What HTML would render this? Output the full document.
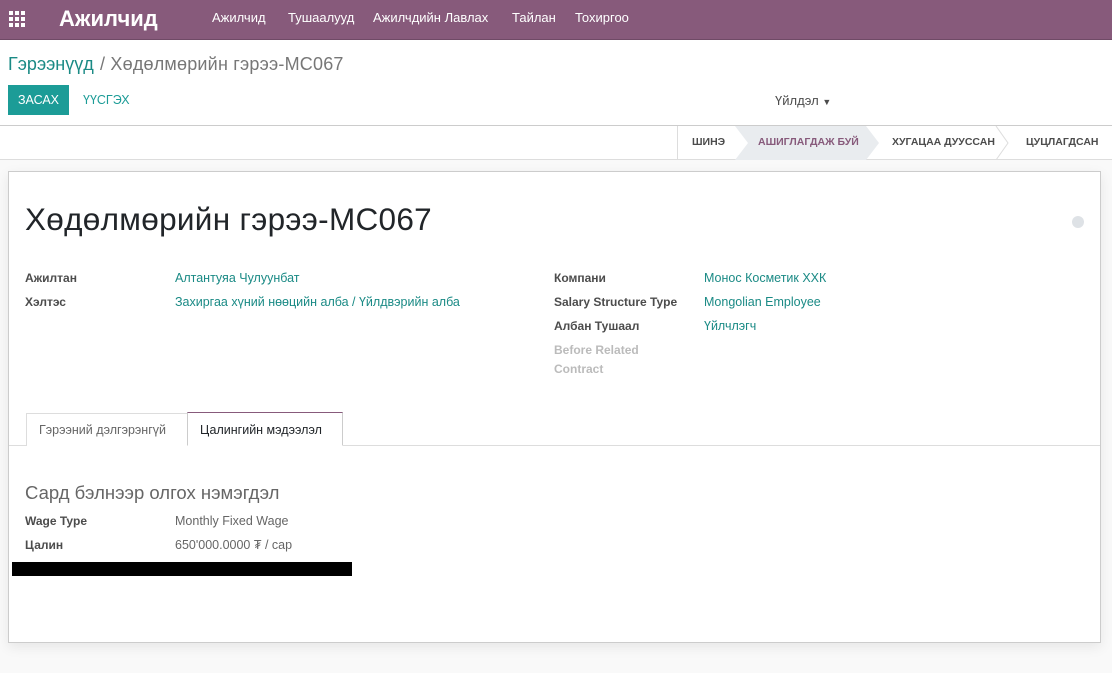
<!DOCTYPE html>
<html><head><meta charset="utf-8"><style>
*{box-sizing:border-box;margin:0;padding:0}
body{width:1112px;height:673px;overflow:hidden;background:#f9f9f9;font-family:"Liberation Sans",sans-serif;font-size:12px;color:#4c4c4c;position:relative}
.a{position:absolute;white-space:nowrap}
.nav{position:absolute;left:0;top:0;width:1112px;height:40px;background:#875a7b;border-bottom:1px solid #6f4a66}
.nav .a{color:#fff;font-size:13px;top:10px}
.cp{position:absolute;left:0;top:40px;width:1112px;height:86px;background:#fff;border-bottom:1px solid #ccc}
.sb{position:absolute;left:0;top:126px;width:1112px;height:34px;background:#fff;border-bottom:1px solid #ddd}
.sheet{position:absolute;left:8px;top:171px;width:1093px;height:472px;background:#fff;border:1px solid #ccc;box-shadow:0 4px 12px rgba(0,0,0,.08)}
.lbl{font-weight:bold;color:#4c4c4c;font-size:12px}
.lnk{color:#1a8a85;font-size:12.5px}
.st{font-size:10.5px;font-weight:bold;color:#4c4c4c;top:10px}
</style></head><body>
<div class="nav">
<svg class="a" style="left:9px;top:11px" width="17" height="16" viewBox="0 0 17 16" fill="#fff"><rect x="0" y="0" width="4" height="4"/><rect x="6" y="0" width="4" height="4"/><rect x="12" y="0" width="4" height="4"/><rect x="0" y="6" width="4" height="4"/><rect x="6" y="6" width="4" height="4"/><rect x="12" y="6" width="4" height="4"/><rect x="0" y="12" width="4" height="4"/><rect x="6" y="12" width="4" height="4"/><rect x="12" y="12" width="4" height="4"/></svg>
<div class="a" style="left:59px;top:6px;font-size:22px;font-weight:bold">Ажилчид</div>
<div class="a" style="left:212px">Ажилчид</div>
<div class="a" style="left:288px">Тушаалууд</div>
<div class="a" style="left:373px">Ажилчдийн Лавлах</div>
<div class="a" style="left:512px">Тайлан</div>
<div class="a" style="left:575px">Тохиргоо</div>
</div>
<div class="cp">
<div class="a" style="left:8px;top:14px;font-size:18px;color:#1a8a85">Гэрээнүүд</div>
<div class="a" style="left:100px;top:14px;font-size:18px;color:#777;letter-spacing:0.2px">/ Хөдөлмөрийн гэрээ-MC067</div>
<div class="a" style="left:8px;top:45px;width:61px;height:30px;background:#1c9c97;color:#fff;font-size:12.5px;line-height:30px;text-align:center">ЗАСАХ</div>
<div class="a" style="left:83px;top:53px;color:#1c9c97;font-size:12.5px">ҮҮСГЭХ</div>
<div class="a" style="left:775px;top:53px;font-size:13px;color:#4c4c4c">Үйлдэл <span style="font-size:9px">▼</span></div>
</div>
<div class="sb">
<div class="a" style="left:677px;top:0;width:1px;height:33px;background:#ddd"></div>
<svg class="a" style="left:735px;top:0" width="145" height="34"><polygon points="0,0 131,0 144,17 131,34 0,34 13,17" fill="#e9ecef"/></svg>
<svg class="a" style="left:995px;top:0" width="16" height="34"><polyline points="1,0 13,17 1,34" fill="none" stroke="#ddd"/></svg>
<div class="a st" style="left:692px">ШИНЭ</div>
<div class="a st" style="left:758px;color:#875a7b">АШИГЛАГДАЖ БУЙ</div>
<div class="a st" style="left:892px">ХУГАЦАА ДУУССАН</div>
<div class="a st" style="left:1026px">ЦУЦЛАГДСАН</div>
</div>
<div class="sheet">
<div class="a" style="left:16px;top:29px;font-size:31.5px;color:#212529;letter-spacing:0.3px">Хөдөлмөрийн гэрээ-MC067</div>
<div class="a" style="left:1063px;top:44px;width:12px;height:12px;border-radius:6px;background:#dee2e6"></div>
<div class="a lbl" style="left:16px;top:99px">Ажилтан</div>
<div class="a lnk" style="left:166px;top:99px">Алтантуяа Чулуунбат</div>
<div class="a lbl" style="left:16px;top:123px">Хэлтэс</div>
<div class="a lnk" style="left:166px;top:123px">Захиргаа хүний нөөцийн алба / Үйлдвэрийн алба</div>
<div class="a lbl" style="left:545px;top:99px">Компани</div>
<div class="a lnk" style="left:695px;top:99px">Монос Косметик ХХК</div>
<div class="a lbl" style="left:545px;top:123px">Salary Structure Type</div>
<div class="a lnk" style="left:695px;top:123px">Mongolian Employee</div>
<div class="a lbl" style="left:545px;top:147px">Албан Тушаал</div>
<div class="a lnk" style="left:695px;top:147px">Үйлчлэгч</div>
<div class="a lbl" style="left:545px;top:171px;color:#bbb">Before Related</div>
<div class="a lbl" style="left:545px;top:190px;color:#bbb">Contract</div>
<div class="a" style="left:0;top:273px;width:1091px;height:1px;background:#ddd"></div>
<div class="a" style="left:17px;top:241px;width:162px;height:33px;border:1px solid #ddd;border-bottom:none;background:#fff;color:#666;font-size:12.5px;padding:9px 12px">Гэрээний дэлгэрэнгүй</div>
<div class="a" style="left:178px;top:240px;width:156px;height:34px;border:1px solid #ccc;border-top:1px solid #875a7b;border-bottom:1px solid #fff;background:#fff;color:#212529;font-size:12.5px;padding:10px 12px">Цалингийн мэдээлэл</div>
<div class="a" style="left:16px;top:310px;font-size:18.5px;color:#666">Сард бэлнээр олгох нэмэгдэл</div>
<div class="a lbl" style="left:16px;top:342px">Wage Type</div>
<div class="a" style="left:166px;top:342px;color:#666;font-size:12.5px">Monthly Fixed Wage</div>
<div class="a lbl" style="left:16px;top:366px">Цалин</div>
<div class="a" style="left:166px;top:366px;color:#666;font-size:12.5px">650'000.0000 ₮ / сар</div>
<div class="a" style="left:3px;top:390px;width:340px;height:14px;background:#000"></div>
</div>
</body></html>
